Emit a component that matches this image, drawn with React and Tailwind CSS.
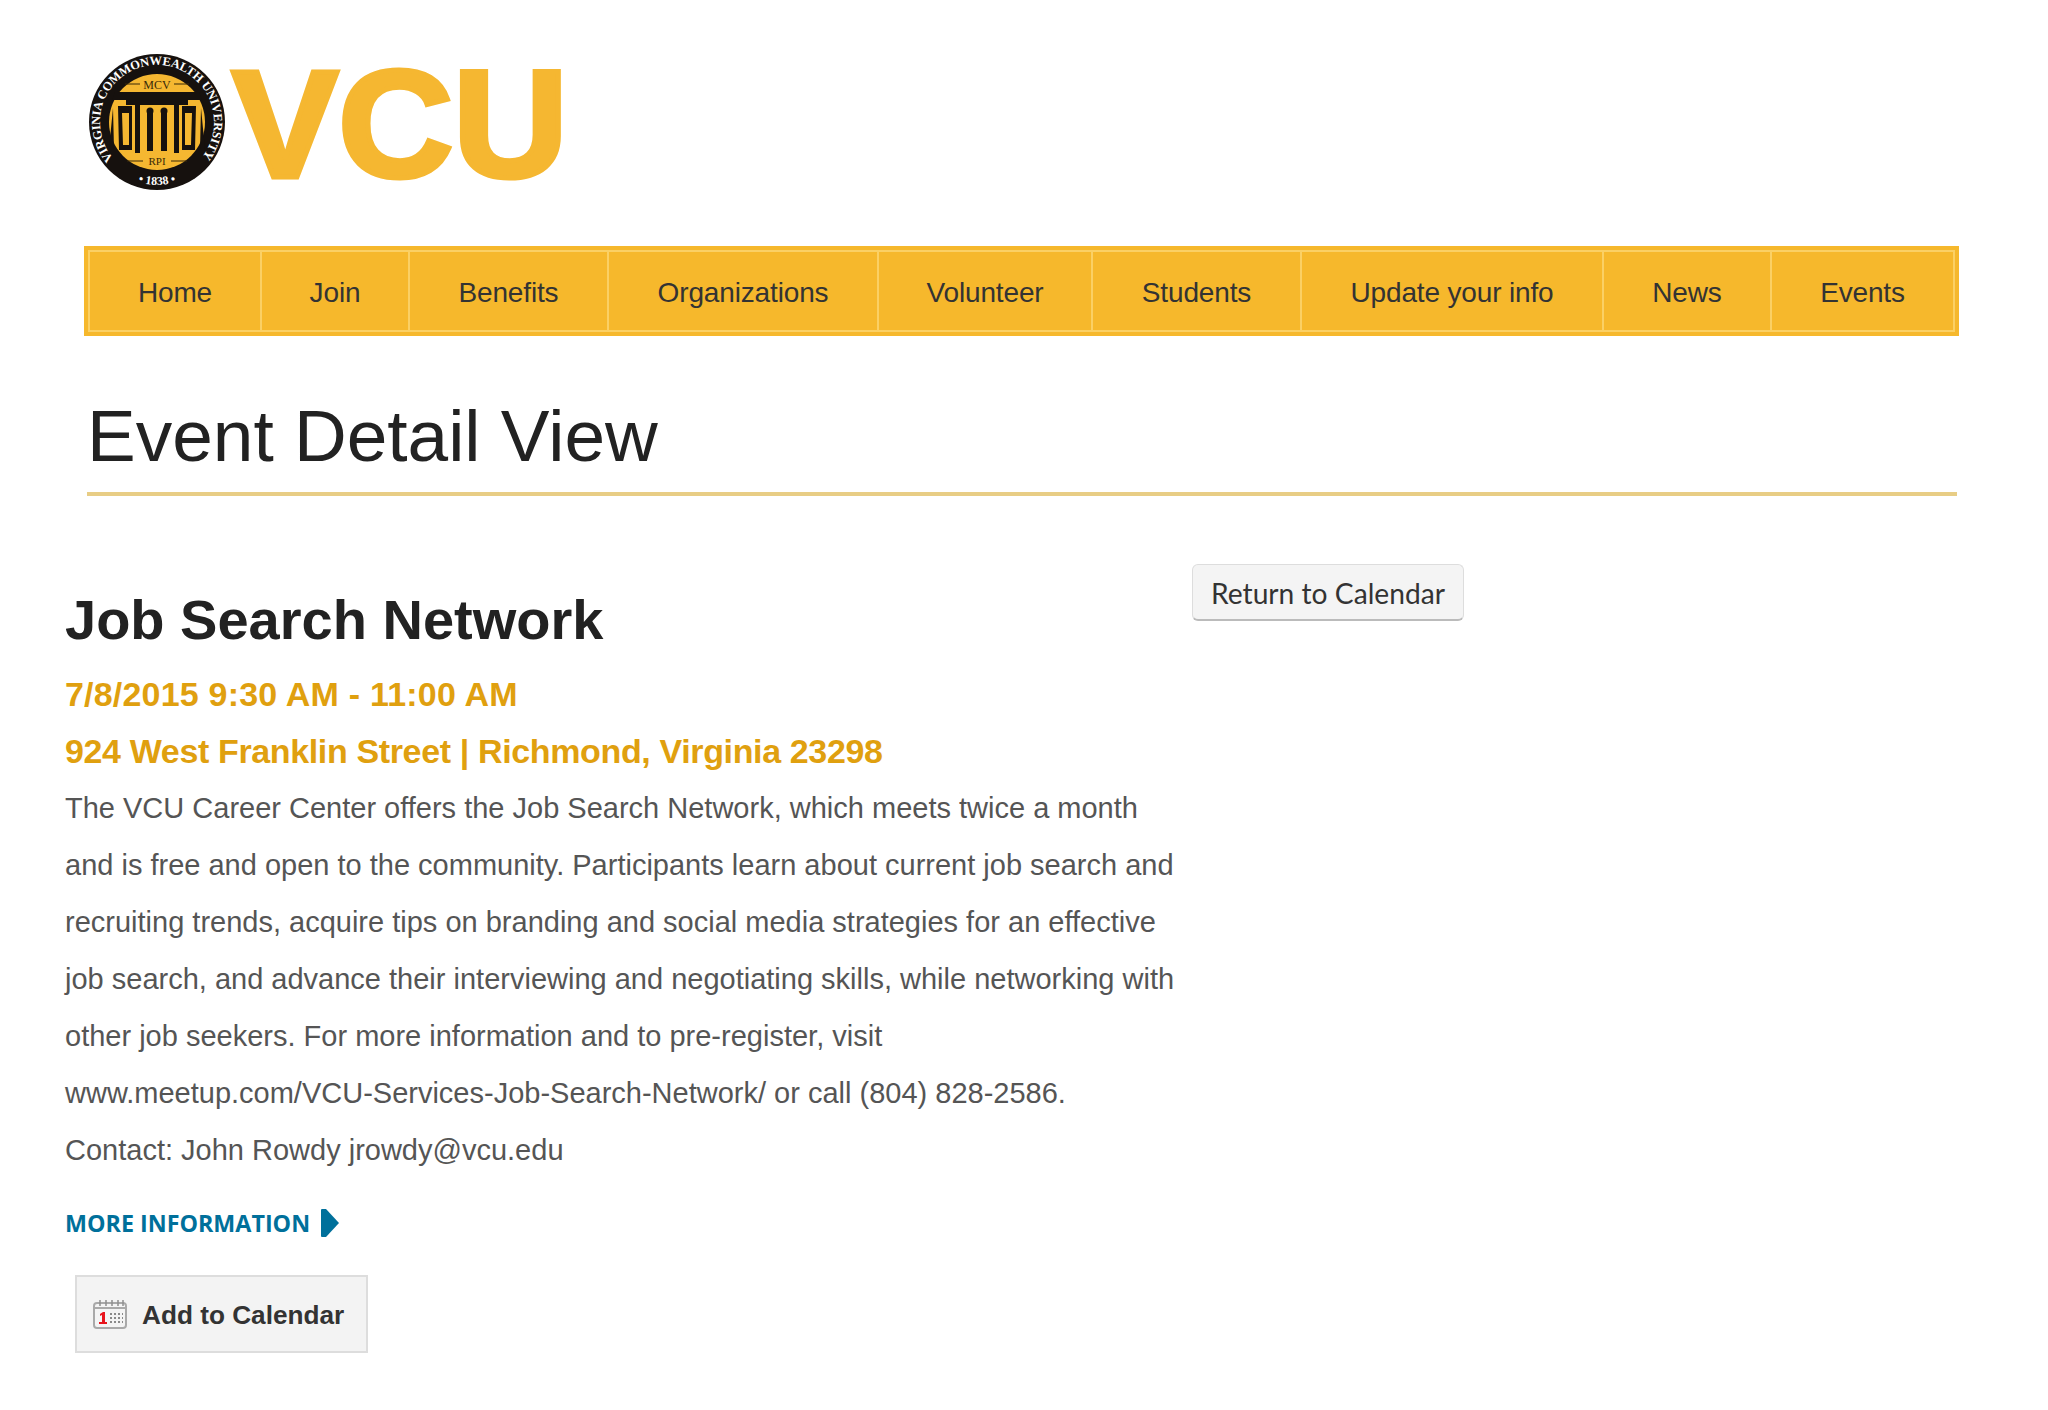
import React from "react";

const navItems = [
  "Home",
  "Join",
  "Benefits",
  "Organizations",
  "Volunteer",
  "Students",
  "Update your info",
  "News",
  "Events",
];

const Logo = () => (
  <svg width="500" height="140" viewBox="0 0 500 140" className="block">
    <defs>
      <path id="sealTop" d="M 25.3 105.6 A 57 57 0 1 1 112.7 105.6" />
      <path id="sealBottom" d="M 33 120.6 A 63 63 0 0 0 105 120.6" />
    </defs>
    {/* seal */}
    <circle cx="69" cy="69" r="68" fill="#16110e" />
    <circle cx="69" cy="69" r="48" fill="#f5b731" />
    <text fontFamily="'Liberation Serif', serif" fontSize="12.5" fontWeight="700" fill="#fff">
      <textPath href="#sealTop" textLength="256">VIRGINIA COMMONWEALTH UNIVERSITY</textPath>
    </text>
    <text textAnchor="middle" fontFamily="'Liberation Serif', serif" fontSize="12" fontWeight="700" fill="#fff">
      <textPath href="#sealBottom" startOffset="50%">• 1838 •</textPath>
    </text>
    <text x="69" y="36" textAnchor="middle" fontFamily="'Liberation Serif', serif" fontSize="12" fill="#3a2a08">MCV</text>
    <text x="69" y="112" textAnchor="middle" fontFamily="'Liberation Serif', serif" fontSize="11" fill="#3a2a08">RPI</text>
    <path d="M52 31H37M86 31h15M55 108H39M83 108h16" stroke="#3a2a08" strokeWidth="1.2" />
    {/* columns */}
    <path d="M27 39h84l3 8H24z" fill="#16110e" />
    <path d="M38 47h62v5H38z" fill="#16110e" />
    <path d="M30 53h14v44H31zM94 53h14l-1 44H94z" fill="#16110e" />
    <path d="M25 55l-4 41h5zM113 55l4 41h-5z" fill="#16110e" />
    <path d="M34 60h7v32h-6zM97 60h7l-1 32h-6z" fill="#f5b731" />
    <path d="M47 52h5v48h-5zM86 52h5v48h-5z" fill="#16110e" />
    <circle cx="62" cy="58" r="3.5" fill="#16110e" />
    <circle cx="76" cy="58" r="3.5" fill="#16110e" />
    <path d="M59 58h6v40h-6zM73 58h6v40h-6z" fill="#16110e" />
    {/* wordmark */}
    <text
      x="144"
      y="124"
      fontFamily="'Liberation Sans', sans-serif"
      fontWeight="700"
      fontSize="152"
      fill="#f5b731"
      stroke="#f5b731"
      strokeWidth="5"
      textLength="336"
      lengthAdjust="spacingAndGlyphs"
    >
      VCU
    </text>
  </svg>
);

const CalendarIcon = () => (
  <svg width="34" height="30" viewBox="0 0 34 30" className="shrink-0">
    <rect x="1" y="4" width="32" height="25" rx="3" fill="#f4f4f4" stroke="#a9a9a9" strokeWidth="2" />
    <path d="M2 9h30" stroke="#a9a9a9" strokeWidth="2" />
    <path d="M7 1v6M13 1v6M19 1v6M25 1v6M30 1v6" stroke="#8f8f8f" strokeWidth="1.5" />
    <path d="M7 15l3-2h2v10h2v2H6v-2h3v-7l-2 1z" fill="#e8141c" />
    <path
      d="M17 14h2v2h-2zM21 14h2v2h-2zM25 14h2v2h-2zM29 14h1v2h-1zM17 18h2v2h-2zM21 18h2v2h-2zM25 18h2v2h-2zM29 18h1v2h-1zM17 22h2v2h-2zM21 22h2v2h-2zM25 22h2v2h-2zM29 22h1v2h-1z"
      fill="#8a8a8a"
    />
  </svg>
);

const Nav = () => (
  <nav className="ml-[84px] w-[1875px] h-[90px] border-[4px] border-[#f6b82c] bg-[#f6b82c]">
    <ul className="grid grid-cols-[172px_148px_199px_270px_214px_209px_302px_168px_1fr] h-full border-2 border-[#fbd064]">
      {navItems.map((item, i) => (
        <li
          key={item}
          className={`flex items-center justify-center pt-[3px] text-[28px] tracking-[-0.15px] whitespace-nowrap text-[#333] ${
            i < navItems.length - 1 ? "border-r-2 border-[#fbd064]" : ""
          }`}
        >
          {item}
        </li>
      ))}
    </ul>
  </nav>
);

export default function App() {
  return (
    <div className="w-[2048px] h-[1410px] bg-white overflow-hidden font-['Liberation_Sans',sans-serif]">
      <header className="pt-[53px] pl-[88px] pb-[53px]">
        <Logo />
      </header>
      <Nav />

      <div className="ml-[87px] mr-[91px] mt-[38px] border-b-4 border-[#e8cd85] h-[122px] pt-[4px] flex items-center">
        <h1 className="text-[73px] leading-none text-[#222]">Event Detail View</h1>
      </div>

      <main className="flex pl-[65px] mt-[68px]">
        <section className="w-[1127px]">
          <h2 className="mt-[25px] text-[56px] leading-[62px] font-bold text-[#222]">Job Search Network</h2>
          <p className="mt-[15px] text-[34px] tracking-[0.2px] leading-[57px] font-bold text-[#e0a00f]">7/8/2015 9:30 AM - 11:00 AM</p>
          <p className="text-[34px] tracking-[-0.36px] leading-[57px] font-bold text-[#e0a00f]">924 West Franklin Street | Richmond, Virginia 23298</p>
          <p className="text-[29px] leading-[57px] text-[#555]">
            The VCU Career Center offers the Job Search Network, which meets twice a month and is free and open to the community. Participants learn about current job search and recruiting trends, acquire tips on branding and social media strategies for an effective job search, and advance their interviewing and negotiating skills, while networking with other job seekers. For more information and to pre-register, visit www.meetup.com/VCU-Services-Job-Search-Network/ or call (804) 828-2586.
          </p>
          <p className="text-[29px] leading-[57px] text-[#555]">Contact: John Rowdy jrowdy@vcu.edu</p>
          <a className="mt-[24px] flex items-center gap-[10px] font-['Open_Sans',sans-serif] font-bold text-[23.3px] leading-[40px] text-[#00709b]">
            MORE INFORMATION
            <svg width="20" height="30" viewBox="0 0 20 30">
              <path d="M2 1 L6 1 L19 15 L6 29 L2 29 Q1 29 1 28 L1 2 Q1 1 2 1z" fill="#00709b" />
            </svg>
          </a>
          <button className="mt-[32px] ml-[10px] w-[293px] h-[78px] flex items-center gap-[15px] pl-[16px] border-2 border-[#ddd] bg-[#f3f3f3] text-[26.2px] font-bold text-[#333]">
            <CalendarIcon />
            <span className="pt-[3px]">Add to Calendar</span>
          </button>
        </section>
        <aside>
          <button className="w-[272px] h-[57px] pt-[2px] rounded-md border border-[#ddd] border-b-2 border-b-[#bbb] bg-[#f4f4f4] font-['Lato',sans-serif] text-[28.2px] text-[#333]">
            Return to Calendar
          </button>
        </aside>
      </main>
    </div>
  );
}
